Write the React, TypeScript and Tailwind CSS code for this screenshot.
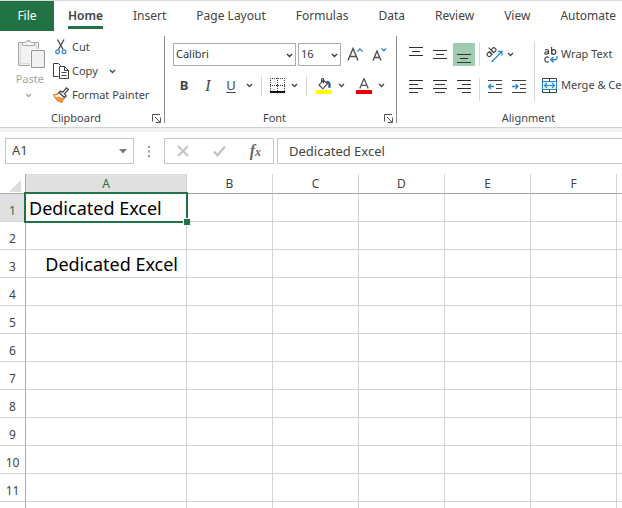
import { useState } from 'react'
import type { ReactNode } from 'react'

const tabs = ['Home', 'Insert', 'Page Layout', 'Formulas', 'Data', 'Review', 'View', 'Automate']
const columns = ['A', 'B', 'C', 'D', 'E', 'F']
const rows = [1, 2, 3, 4, 5, 6, 7, 8, 9, 10, 11]

const cells: Record<string, string> = {
  A1: 'Dedicated Excel',
  A3: 'Dedicated Excel',
}

function Chevron({ className = '' }: { className?: string }) {
  return (
    <svg viewBox="0 0 7 5" className={`h-[5px] w-[7px] shrink-0 ${className}`} fill="none" stroke="currentColor" strokeWidth="1.3">
      <path d="M1 1l2.5 2.5L6 1" />
    </svg>
  )
}

function Launcher({ label }: { label: string }) {
  return (
    <button type="button" aria-label={label}>
      <svg viewBox="0 0 9 9" className="size-[9px]" fill="none" stroke="#555" strokeWidth="1">
        <path d="M.5 7.5V.5H8M3 3l5 5M8.5 3.5v5h-5" />
      </svg>
    </button>
  )
}

interface GroupProps {
  label: string
  launcher?: boolean
  className: string
  children: ReactNode
}

function Group({ label, launcher = true, className, children }: GroupProps) {
  return (
    <section aria-label={label} className={`flex shrink-0 flex-col ${className}`}>
      <div className="h-[78px]">{children}</div>
      <div className="flex h-[18px] items-center pr-[3px]">
        <span className="flex-1 text-center">{label}</span>
        {launcher && <Launcher label={`${label} settings`} />}
      </div>
    </section>
  )
}

function GroupDivider() {
  return <div className="mt-[5px] h-[87px] w-px shrink-0 bg-[#8a8a8a]" />
}

function Divider({ className = 'h-5' }: { className?: string }) {
  return <span className={`w-px shrink-0 bg-[#d8d8d8] ${className}`} />
}

function PasteIcon() {
  return (
    <svg viewBox="0 0 28 31" className="h-[31px] w-7" fill="#ececec" stroke="#a8a8a8">
      <path d="M.5 4.5h20v23H.5z" />
      <path d="M2.5 6.5h16v19h-16z" fill="#f2f2f2" stroke="#dcdcdc" />
      <path d="M4.5 7.5v-3h3.2a2.9 2.9 0 0 1 5.6 0h3.2v3z" fill="#f5f5f5" />
      <circle cx="10.5" cy="3.5" r=".8" fill="#a8a8a8" stroke="none" />
      <path d="M13.5 12.5h13v17h-13z" fill="#f1f1f1" stroke="#fff" strokeWidth="3" />
      <path d="M13.5 12.5h13v17h-13z" fill="#f1f1f1" stroke="#969696" />
    </svg>
  )
}

function CutIcon() {
  return (
    <svg viewBox="0 0 16 16" className="size-4" fill="none">
      <path d="M4.5.5l5.6 10M11 .5l-5.6 10" stroke="#505050" strokeWidth="1.4" />
      <circle cx="4.6" cy="12.8" r="1.9" stroke="#2b88d0" strokeWidth="1.2" />
      <circle cx="11" cy="12.8" r="1.9" stroke="#2b88d0" strokeWidth="1.2" />
    </svg>
  )
}

function CopyIcon() {
  return (
    <svg viewBox="0 0 16 16" className="size-4" fill="#fff" stroke="#404040">
      <path d="M5.5 13.5h-5V.5h5l2 2" />
      <path d="M6.5 3.5h5l4 4v8h-9z" />
      <path d="M11.5 3.5v4h4M8.5 9.5h5M8.5 12.5h5" fill="none" />
    </svg>
  )
}

function PainterIcon() {
  return (
    <svg viewBox="0 0 16 16" className="size-4" fill="none" strokeLinejoin="round">
      <path d="M.8 7.8c2.4 0 4.2-.6 5.6-2.3l5 5c-1.2 1.2-2 2.9-2.5 4.800C5 14.500 2.300 11.900.8 7.800z" fill="#fff" stroke="#e8822b" strokeWidth="1.3" />
      <path d="M2.5 10.8l3-1.300 5 1.800-1.700 3.800c-2.500-.6-4.700-2.100-6.300-4.300z" fill="#f0953f" />
      <path d="M6 5.5L7.6 4l2 1.400L13.400.8l1.900 1.700-3.900 4.400 1.800 2-1.600 1.600z" fill="#fff" stroke="#4a4a4a" strokeWidth="1.3" />
    </svg>
  )
}

function BordersIcon() {
  return (
    <svg viewBox="0 0 15 15" className="size-[15px]" stroke="#404040" fill="none" shapeRendering="crispEdges">
      <path d="M0 .5h15M.5 0v14M14.5 0v14M7.5 0v14M0 7.5h15" strokeDasharray="1 1" />
      <path d="M6 7.5h3M7.5 6v3" />
      <path d="M0 14h15" stroke="#111" strokeWidth="2" />
    </svg>
  )
}

function FillIcon() {
  return (
    <svg viewBox="0 0 16 16" className="size-4" fill="none">
      <path d="M7.3 2L3 7l3.800 3.800 4.700-5L7.300 2zM7.500 5.200V.8c-1.200-.6-2 .1-2 1.200v2" stroke="#444" strokeWidth="1.1" />
      <path d="M10.5 3.5c3-.3 4 2 3.300 6.300M11 4.200l2 1.300v4.300" stroke="#2b579a" strokeWidth="1.4" />
      <path d="M0 12h16v4H0z" fill="#ff0" />
    </svg>
  )
}

function FontColorIcon() {
  return (
    <svg viewBox="0 0 16 16" className="size-4" fill="none">
      <path d="M3.8 10.5L8 .5l4.2 10M5.2 7.3h5.600" stroke="#555" strokeWidth="1.3" />
      <path d="M0 12h16v4H0z" fill="#e60000" />
    </svg>
  )
}

function GrowFontIcon({ shrink = false }: { shrink?: boolean }) {
  return (
    <svg viewBox="0 0 16 16" className="size-4" fill="none" strokeWidth="1.4">
      <path d={shrink ? 'M1 13.500L5 4l4 9.500M2.500 10.500h5' : 'M1 13.500L6 1.500l5 12M2.800 9.500h6.400'} stroke="#505050" />
      <path d={shrink ? 'M9.500 1.500l2.300 2.300L14 1.500' : 'M10.500 4.500L13 2l2.500 2.500'} stroke="#3b87c8" />
    </svg>
  )
}

function LinesIcon({ d }: { d: string }) {
  return (
    <svg viewBox="0 0 14 16" className="h-4 w-3.5" stroke="#303030" fill="none" shapeRendering="crispEdges">
      <path d={d} />
    </svg>
  )
}

function IndentIcon({ increase = false }: { increase?: boolean }) {
  return (
    <svg viewBox="0 0 14 16" className="h-4 w-3.5" fill="none">
      <path d="M0 .5h14M8 4.5h6M8 8.5h6M0 12.5h14" stroke="#404040" />
      <path d={increase ? 'M0 6.500h6M3.500 4L6 6.500 3.500 9' : 'M6 6.500H.5M3 4L.5 6.500 3 9'} stroke="#2b88c8" strokeWidth="1.3" />
    </svg>
  )
}

function OrientationIcon() {
  return (
    <svg viewBox="0 0 17 16" className="h-4 w-[17px]" fill="none">
      <g stroke="#444" strokeWidth="1.1" transform="rotate(-45 5 5)">
        <ellipse cx="2" cy="5.5" rx="2" ry="2.1" />
        <path d="M4.2 3v5M6.400.3V8" />
        <ellipse cx="8.5" cy="5.5" rx="2" ry="2.1" />
      </g>
      <path d="M5.500 15L15.500 5M12 4.500h4v4" stroke="#2b88d0" strokeWidth="1.3" />
    </svg>
  )
}

function WrapIcon() {
  return (
    <svg viewBox="0 0 14 16" className="h-4 w-3.5" fill="none" strokeWidth="1.2">
      <g stroke="#444">
        <path d="M1 3.200c1.200-1 3.600-1 3.600.8v3.300M4.600 4.900C2.500 4.700.8 5 .8 6.200c0 1.500 3 1.500 3.800-.4" />
        <path d="M7.600 0v7.500" />
        <ellipse cx="9.7" cy="5" rx="2.1" ry="2.3" />
        <path d="M4.800 10.500C3 9.300.8 10.300.8 12.500s2.200 3.200 4 2" />
      </g>
      <path d="M12.800 9c.8 2.400-.5 3.800-2.500 3.800H7M9.500 10L6.800 12.800l2.700 2.700" stroke="#2b88d0" strokeWidth="1.4" />
    </svg>
  )
}

function MergeIcon() {
  return (
    <svg viewBox="0 0 15 15" className="size-[15px]" fill="none">
      <path d="M.5.5h14v14H.5zM7.5.5v3M7.5 11.5v3" stroke="#404040" />
      <path d="M.5 3.5h14v8H.5z" fill="#e9f4fb" stroke="#2b88c8" />
      <path d="M3 7.5h9M5 5L2.5 7.5 5 10M10 5l2.500 2.500L10 10" stroke="#2b88c8" strokeWidth="1.2" />
    </svg>
  )
}

function IconButton({ label, className = 'w-[22px]', children }: { label: string; className?: string; children: ReactNode }) {
  return (
    <button type="button" aria-label={label} className={`flex h-[23px] shrink-0 items-center justify-center ${className}`}>
      {children}
    </button>
  )
}

function Ribbon() {
  return (
    <div className="flex h-[97px] overflow-hidden border-b border-[#d2d2d2] text-[11px] whitespace-nowrap">
      <Group label="Clipboard" className="w-[164px]">
        <div className="flex">
          <button type="button" className="flex w-[46px] flex-col items-end pt-[7px] text-[#a6a6a6]">
            <PasteIcon />
            <span className="pr-0.5 leading-5">Paste</span>
            <Chevron className="mt-1 mr-3.5" />
          </button>
          <div className="flex flex-col gap-2 pt-2 pl-[7px]">
            <button type="button" className="flex h-4 items-center gap-[3px]">
              <CutIcon />
              Cut
            </button>
            <button type="button" className="flex h-4 items-center gap-[3px]">
              <CopyIcon />
              Copy
              <Chevron className="ml-2" />
            </button>
            <button type="button" className="flex h-4 items-center gap-[3px]">
              <PainterIcon />
              Format Painter
            </button>
          </div>
        </div>
      </Group>
      <GroupDivider />
      <Group label="Font" className="w-[231px]">
        <div className="flex items-center pt-3 pl-2 text-[#333]">
          <div className="relative mr-0.5">
            <select aria-label="Font" className="h-[23px] w-[123px] appearance-none border border-[#ababab] bg-white pl-0.5">
              <option>Calibri</option>
            </select>
            <Chevron className="pointer-events-none absolute top-2.5 right-[3px]" />
          </div>
          <div className="relative">
            <select aria-label="Font size" className="h-[23px] w-[43px] appearance-none border border-[#ababab] bg-white pl-0.5">
              <option>16</option>
            </select>
            <Chevron className="pointer-events-none absolute top-2.5 right-[3px]" />
          </div>
          <IconButton label="Increase font size" className="ml-[3px] w-[22px]">
            <GrowFontIcon />
          </IconButton>
          <IconButton label="Decrease font size" className="ml-[3px] w-[22px]">
            <GrowFontIcon shrink />
          </IconButton>
        </div>
        <div className="flex items-center pt-2 pl-2">
          <IconButton label="Bold">
            <span className="text-[13px] font-bold">B</span>
          </IconButton>
          <IconButton label="Italic" className="w-[26px]">
            <span className="font-['Liberation_Serif',serif] text-base italic">I</span>
          </IconButton>
          <IconButton label="Underline" className="w-5">
            <span className="text-[13px] underline underline-offset-2">U</span>
          </IconButton>
          <IconButton label="Underline style" className="w-4">
            <Chevron />
          </IconButton>
          <Divider className="mx-1 h-5" />
          <IconButton label="Borders">
            <BordersIcon />
          </IconButton>
          <IconButton label="Border style" className="w-3">
            <Chevron />
          </IconButton>
          <Divider className="ml-1.5 h-5" />
          <IconButton label="Fill color" className="ml-1.5 w-[22px]">
            <FillIcon />
          </IconButton>
          <IconButton label="Fill color options" className="w-3">
            <Chevron />
          </IconButton>
          <IconButton label="Font color" className="ml-1.5 w-[22px]">
            <FontColorIcon />
          </IconButton>
          <IconButton label="Font color options" className="w-3">
            <Chevron />
          </IconButton>
        </div>
      </Group>
      <GroupDivider />
      <Group label="Alignment" launcher={false} className="w-[266px]">
        <div className="flex pt-2.5 pl-2">
          <div className="flex flex-col gap-2.5">
            <div className="mt-0.5 flex gap-0.5">
              <IconButton label="Top align">
                <LinesIcon d="M0 .5h14M3 4.5h8M0 8.5h14" />
              </IconButton>
              <IconButton label="Middle align">
                <LinesIcon d="M0 3.5h14M3 7.5h8M0 11.5h14" />
              </IconButton>
              <IconButton label="Bottom align" className="w-[22px] bg-[#a0cdb2] pt-1">
                <LinesIcon d="M0 5.5h14M3 9.5h8M0 13.5h14" />
              </IconButton>
            </div>
            <div className="flex gap-0.5">
              <IconButton label="Align left">
                <LinesIcon d="M0 .5h14M0 4.5h9M0 8.5h14M0 12.5h9" />
              </IconButton>
              <IconButton label="Center">
                <LinesIcon d="M0 .5h14M2 4.5h10M0 8.5h14M2 12.5h10" />
              </IconButton>
              <IconButton label="Align right">
                <LinesIcon d="M0 .5h14M5 4.5h9M0 8.5h14M5 12.5h9" />
              </IconButton>
            </div>
          </div>
          <div className="ml-1 flex flex-col gap-3">
            <Divider className="mt-0.5 h-[23px]" />
            <Divider className="h-[23px]" />
          </div>
          <div className="ml-1 flex flex-col gap-2.5">
            <div className="mt-0.5 flex">
              <IconButton label="Orientation" className="w-5">
                <OrientationIcon />
              </IconButton>
              <IconButton label="Orientation options" className="w-3">
                <Chevron />
              </IconButton>
            </div>
            <div className="flex gap-0.5">
              <IconButton label="Decrease indent">
                <IndentIcon />
              </IconButton>
              <IconButton label="Increase indent">
                <IndentIcon increase />
              </IconButton>
            </div>
          </div>
          <Divider className="ml-1 h-[60px]" />
          <div className="ml-[7px] flex flex-col gap-2">
            <button type="button" className="mt-0.5 flex h-[23px] items-center gap-[3px] pl-0.5">
              <WrapIcon />
              Wrap Text
            </button>
            <button type="button" className="flex h-[23px] items-center gap-1">
              <MergeIcon />
              Merge &amp; Center
            </button>
          </div>
        </div>
      </Group>
    </div>
  )
}

function FormulaBar({ value, onChange }: { value: string; onChange: (value: string) => void }) {
  return (
    <div className="flex h-[46px] items-center border-t-4 border-[#f1f1f1] pb-1 pl-[5px] text-[13px]">
      <div className="flex h-[26px] w-[129px] items-center border border-[#c6c6c6] pr-1.5">
        <input aria-label="Name box" defaultValue="A1" className="min-w-0 flex-1 pl-1.5 outline-none" />
        <button type="button" aria-label="Named cells">
          <svg viewBox="0 0 8 5" className="h-[5px] w-2" fill="#777">
            <path d="M0 0h8L4 4.5z" />
          </svg>
        </button>
      </div>
      <svg viewBox="0 0 2 11" className="mx-3.5 h-[11px] w-0.5" fill="#999">
        <path d="M0 0h2v2H0zM0 4.5h2v2H0zM0 9h2v2H0z" />
      </svg>
      <div className="flex h-[26px] w-[110px] items-center justify-between border border-[#c6c6c6] px-3">
        <button type="button" aria-label="Cancel">
          <svg viewBox="0 0 12 12" className="size-3" fill="none" stroke="#c2c2c2" strokeWidth="1.8">
            <path d="M1 1l10 10M11 1L1 11" />
          </svg>
        </button>
        <button type="button" aria-label="Enter">
          <svg viewBox="0 0 13 12" className="h-3 w-[13px]" fill="none" stroke="#c2c2c2" strokeWidth="2.4">
            <path d="M1 6.5l3.500 3.800L12 1.500" />
          </svg>
        </button>
        <button type="button" aria-label="Insert function" className="font-['Liberation_Serif',serif] text-base leading-4 font-bold text-[#666] italic">
          f<sub className="bottom-0 text-xs">x</sub>
        </button>
      </div>
      <input
        aria-label="Formula bar"
        value={value}
        onChange={(event) => onChange(event.target.value)}
        className="ml-[3px] h-[26px] min-w-0 flex-1 border border-r-0 border-[#c6c6c6] pl-[11px] outline-none"
      />
    </div>
  )
}

function Sheet({ values }: { values: Record<string, string> }) {
  return (
    <table className="w-full table-fixed border-separate border-spacing-0">
      <colgroup>
        <col className="w-[26px]" />
        <col className="w-[161px]" />
        {columns.slice(1).map((column) => (
          <col key={column} className="w-[86px]" />
        ))}
        <col />
      </colgroup>
      <thead>
        <tr className="h-5">
          <th className="border-r border-b border-[#ababab] p-0">
            <svg viewBox="0 0 12 12" className="mt-1 mr-1 ml-auto size-3" fill="#dcdcdc">
              <path d="M12 0v12H0z" />
            </svg>
          </th>
          {columns.map((column) => (
            <th
              key={column}
              scope="col"
              className={`border-r border-b border-r-[#d4d4d4] border-b-[#a0a0a0] p-0 leading-[19px] font-normal ${
                column === 'A' ? 'bg-[#e0e0e0] text-[#217346]' : ''
              }`}
            >
              {column}
            </th>
          ))}
          <td className="border-b border-[#a0a0a0] p-0" />
        </tr>
      </thead>
      <tbody>
        {rows.map((row) => (
          <tr key={row} className="h-7">
            <th
              scope="row"
              className={`border-r border-b border-r-[#ababab] border-b-[#d4d4d4] p-0 pt-1.5 font-normal ${
                row === 1 ? 'bg-[#e0e0e0] text-[#217346]' : ''
              }`}
            >
              {row}
            </th>
            {columns.map((column) => {
              const id = `${column}${row}`
              return (
                <td
                  key={id}
                  className={`border-r border-b border-[#d4d4d4] p-0 text-lg leading-[26px] whitespace-nowrap text-black ${
                    id === 'A3' ? 'pr-2 text-right' : 'pl-[3px]'
                  } ${id === 'A1' ? 'relative z-10' : ''}`}
                >
                  {values[id]}
                  {id === 'A1' && (
                    <span className="pointer-events-none absolute -inset-0.5 border-2 border-[#217346]">
                      <span className="absolute -right-1 -bottom-1 size-[7px] border-t border-l border-white bg-[#217346]" />
                    </span>
                  )}
                </td>
              )
            })}
            <td className="border-b border-[#d4d4d4] p-0" />
          </tr>
        ))}
        <tr className="h-1.5">
          <td className="border-r border-[#ababab] p-0" />
          {columns.map((column) => (
            <td key={column} className="border-r border-[#d4d4d4] p-0" />
          ))}
          <td className="p-0" />
        </tr>
      </tbody>
    </table>
  )
}

export default function App() {
  const [values, setValues] = useState(cells)

  return (
    <main className="w-full overflow-hidden bg-white font-['Noto_Sans','Open_Sans',sans-serif] text-xs text-[#444]">
      <nav className="flex h-[31px] overflow-hidden border-t border-[#d9d9d9] whitespace-nowrap">
        <a href="#file" className="flex w-[54px] shrink-0 items-center justify-center bg-[#217346] text-white">
          File
        </a>
        <div className="flex gap-[30px] pl-3.5">
          {tabs.map((tab) => (
            <a
              key={tab}
              href={`#${tab}`}
              className={`flex h-7 items-center border-b-[3px] pt-1 ${
                tab === 'Home' ? 'border-[#217346] font-semibold' : 'border-transparent'
              }`}
            >
              {tab}
            </a>
          ))}
        </div>
      </nav>
      <Ribbon />
      <FormulaBar value={values.A1} onChange={(value) => setValues({ ...values, A1: value })} />
      <Sheet values={values} />
    </main>
  )
}
